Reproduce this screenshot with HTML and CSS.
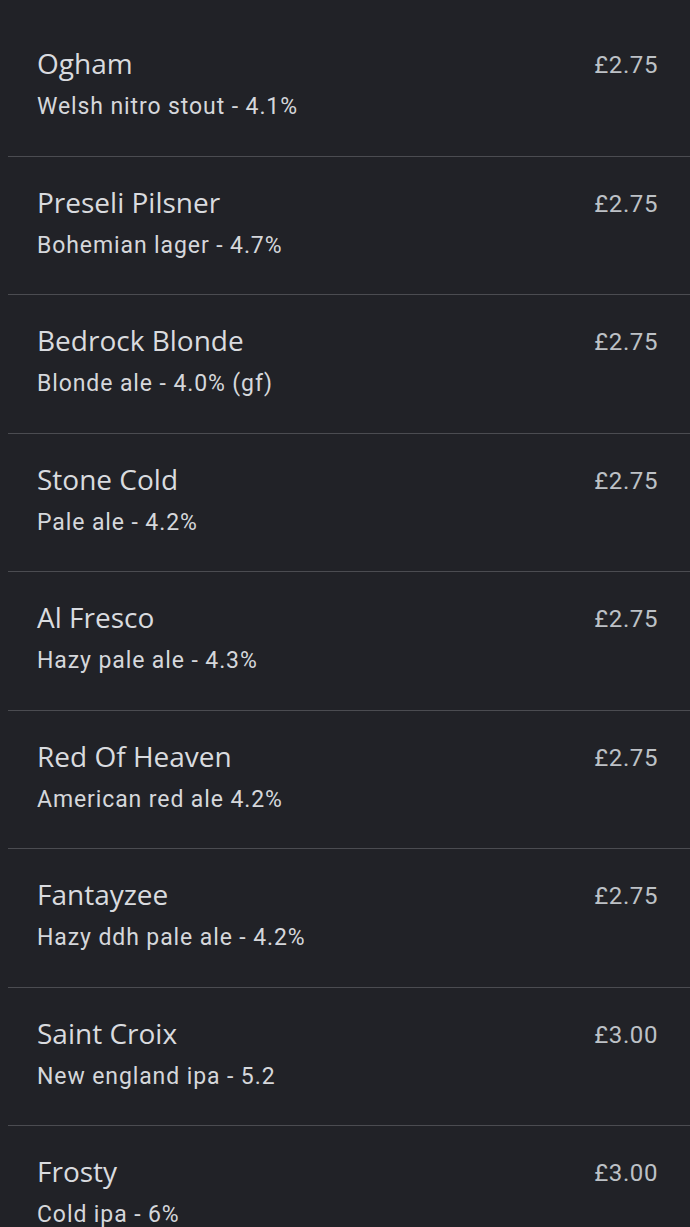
FILE: index.html
```html
<!DOCTYPE html>
<html lang="en">
<head>
    <meta charset="UTF-8">
    <meta name="viewport" content="width=device-width, initial-scale=1.0">
    <title>Drinks</title>
    <link rel="stylesheet" href="styles.css">
</head>
<body>
    <ul class="menu">
        <li class="item">
            <div class="info">
                <div class="name">Ogham</div>
                <div class="desc">Welsh nitro stout - 4.1%</div>
            </div>
            <div class="price">£2.75</div>
        </li>
        <li class="item">
            <div class="info">
                <div class="name">Preseli Pilsner</div>
                <div class="desc">Bohemian lager - 4.7%</div>
            </div>
            <div class="price">£2.75</div>
        </li>
        <li class="item">
            <div class="info">
                <div class="name">Bedrock Blonde</div>
                <div class="desc">Blonde ale - 4.0% (gf)</div>
            </div>
            <div class="price">£2.75</div>
        </li>
        <li class="item">
            <div class="info">
                <div class="name">Stone Cold</div>
                <div class="desc">Pale ale - 4.2%</div>
            </div>
            <div class="price">£2.75</div>
        </li>
        <li class="item">
            <div class="info">
                <div class="name">Al Fresco</div>
                <div class="desc">Hazy pale ale - 4.3%</div>
            </div>
            <div class="price">£2.75</div>
        </li>
        <li class="item">
            <div class="info">
                <div class="name">Red Of Heaven</div>
                <div class="desc">American red ale 4.2%</div>
            </div>
            <div class="price">£2.75</div>
        </li>
        <li class="item">
            <div class="info">
                <div class="name">Fantayzee</div>
                <div class="desc">Hazy ddh pale ale - 4.2%</div>
            </div>
            <div class="price">£2.75</div>
        </li>
        <li class="item">
            <div class="info">
                <div class="name">Saint Croix</div>
                <div class="desc">New england ipa - 5.2</div>
            </div>
            <div class="price">£3.00</div>
        </li>
        <li class="item">
            <div class="info">
                <div class="name">Frosty</div>
                <div class="desc">Cold ipa - 6%</div>
            </div>
            <div class="price">£3.00</div>
        </li>
    </ul>
</body>
</html>
```

FILE: styles.css
```css
body {
    margin: 0;
    padding: 0;
    background-color: #212227;
    font-family: Roboto, "Noto Sans", sans-serif;
    color: #dadce0;
}
.menu {
    list-style: none;
    margin: 0;
    padding: 18px 0 0 8px;
}
.item {
    display: flex;
    justify-content: space-between;
    align-items: flex-start;
    height: 137.5px;
    padding: 0 32px 0 29px;
    border-bottom: 1px solid #4b4c51;
    box-sizing: content-box;
}
.info {
    padding-top: 27px;
}
.name {
    font-family: "Open Sans", sans-serif;
    font-size: 28px;
    line-height: 36px;
    color: #d9dbdf;
}
.desc {
    font-size: 23px;
    line-height: 32px;
    letter-spacing: 0.9px;
    margin-top: 10px;
    color: #d5d7db;
}
.price {
    padding-top: 32px;
    font-size: 24px;
    line-height: 30px;
    letter-spacing: 0.6px;
    color: #bdc1c6;
}
```
